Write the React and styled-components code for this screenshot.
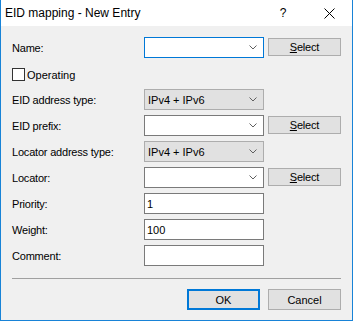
import React from "react";
import styled, { createGlobalStyle } from "styled-components";

const GlobalStyle = createGlobalStyle`
  html, body { margin: 0; padding: 0; background: #ffffff; }
  * { box-sizing: border-box; }
`;

const Window = styled.div`
  width: 353px;
  height: 321px;
  display: flex;
  flex-direction: column;
  background: #f0f0f0;
  border: 1px solid #1883d7;
  border-top: none;
  font-family: "Liberation Sans", Arial, sans-serif;
  font-size: 11px;
  color: #000;
`;

const TitleBar = styled.div`
  height: 26px;
  flex: none;
  display: flex;
  align-items: center;
  background: #ffffff;
`;

const Title = styled.div`
  flex: 1;
  padding-left: 4px;
  font-size: 12px;
  color: #000;
`;

const CaptionButton = styled.div`
  width: 46px;
  height: 26px;
  display: flex;
  align-items: center;
  justify-content: center;
  font-size: 12px;
  color: #000;
`;

const Body = styled.div`
  flex: 1;
  display: flex;
  flex-direction: column;
  padding: 11px 11px 10px 11px;
`;

const Form = styled.div`
  display: grid;
  grid-template-columns: 128px 120px 73px;
  column-gap: 4px;
  row-gap: 5px;
  grid-auto-rows: 21px;
`;

const Label = styled.div`
  display: flex;
  align-items: center;
  letter-spacing: -0.2px;
  grid-column: 1;
  white-space: nowrap;
`;

const CheckRow = styled.label`
  grid-column: 1 / -1;
  display: flex;
  align-items: center;
  gap: 2px;
  padding-top: 2px;
`;

const CheckBox = styled.span`
  width: 13px;
  height: 13px;
  border: 1px solid #333333;
  background: #ffffff;
  flex: none;
`;

const Field = styled.div`
  grid-column: 2;
  height: 21px;
  display: flex;
  align-items: center;
  padding-left: ${(p) => (p.$combo ? "3px" : "2px")};
  padding-right: 6px;
  background: ${(p) => (p.$combo ? "#e1e1e1" : "#ffffff")};
  border: 1px solid ${(p) => (p.$focused ? "#0078d7" : p.$combo ? "#adadad" : "#7a7a7a")};
  white-space: nowrap;
`;

const FieldText = styled.span`
  flex: 1;
`;

const SideButton = styled.div`
  grid-column: 3;
  align-self: start;
  margin-top: 1px;
  height: 18px;
  display: flex;
  align-items: center;
  justify-content: center;
  background: #e1e1e1;
  border: 1px solid #adadad;
  letter-spacing: -0.2px;
`;

const Separator = styled.div`
  margin-top: 12px;
  height: 1px;
  background: #a0a0a0;
`;

const Footer = styled.div`
  margin-top: 10px;
  display: flex;
  justify-content: flex-end;
  gap: 8px;
`;

const DialogButton = styled.div`
  width: 73px;
  height: 21px;
  display: flex;
  align-items: center;
  justify-content: center;
  background: #e1e1e1;
  border: ${(p) => (p.$default ? "2px solid #0078d7" : "1px solid #adadad")};
`;

const Chevron = () => (
  <svg width="8" height="5" viewBox="0 0 8 5">
    <polyline points="0.5,0.5 4,4 7.5,0.5" fill="none" stroke="#606060" strokeWidth="1" />
  </svg>
);

const CloseIcon = () => (
  <svg width="11" height="11" viewBox="0 0 11 11">
    <line x1="0.5" y1="0.5" x2="10.5" y2="10.5" stroke="#000" strokeWidth="1" />
    <line x1="10.5" y1="0.5" x2="0.5" y2="10.5" stroke="#000" strokeWidth="1" />
  </svg>
);

const SelectBtn = () => (
  <SideButton>
    <span><u>S</u>elect</span>
  </SideButton>
);

export default function App() {
  return (
    <>
      <GlobalStyle />
      <Window>
        <TitleBar>
          <Title>EID mapping - New Entry</Title>
          <CaptionButton>?</CaptionButton>
          <CaptionButton><CloseIcon /></CaptionButton>
        </TitleBar>
        <Body>
          <Form>
            <Label>Name:</Label>
            <Field $focused><FieldText /><Chevron /></Field>
            <SelectBtn />

            <CheckRow><CheckBox />Operating</CheckRow>

            <Label>EID address type:</Label>
            <Field $combo><FieldText>IPv4 + IPv6</FieldText><Chevron /></Field>

            <Label>EID prefix:</Label>
            <Field><FieldText /><Chevron /></Field>
            <SelectBtn />

            <Label>Locator address type:</Label>
            <Field $combo><FieldText>IPv4 + IPv6</FieldText><Chevron /></Field>

            <Label>Locator:</Label>
            <Field><FieldText /><Chevron /></Field>
            <SelectBtn />

            <Label>Priority:</Label>
            <Field><FieldText>1</FieldText></Field>

            <Label>Weight:</Label>
            <Field><FieldText>100</FieldText></Field>

            <Label>Comment:</Label>
            <Field><FieldText /></Field>
          </Form>
          <Separator />
          <Footer>
            <DialogButton $default>OK</DialogButton>
            <DialogButton>Cancel</DialogButton>
          </Footer>
        </Body>
      </Window>
    </>
  );
}
